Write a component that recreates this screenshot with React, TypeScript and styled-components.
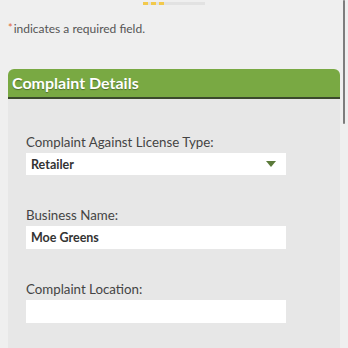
import React from "react";
import styled, { createGlobalStyle } from "styled-components";

const GlobalStyle = createGlobalStyle`
  html, body {
    margin: 0;
    padding: 0;
    background: #efefef;
  }
  body {
    font-family: Lato, "Open Sans", sans-serif;
    color: #444;
  }
`;

const Page = styled.div`
  position: relative;
  min-height: 348px;
  width: 348px;
  overflow: hidden;
  background: #efefef;
`;

const ScrollThumb = styled.div`
  position: absolute;
  top: 0;
  right: 3px;
  width: 2px;
  height: 124px;
  border-radius: 1px;
  background: #7d7d7d;
`;

const Progress = styled.div`
  display: flex;
  align-items: center;
  width: 62px;
  height: 3px;
  margin: 2px auto 0;
  background: #e2e2e2;

  & span {
    width: 5px;
    height: 3px;
    margin-right: 3px;
    background: #f2c94c;
  }
`;

const RequiredNote = styled.div`
  margin: 15px 0 0 8px;
  font-size: 12px;
  line-height: 16px;
  color: #555;

  & .star {
    color: #e0663a;
    font-size: 11px;
    vertical-align: 1px;
    margin-right: 1px;
  }
`;

const Section = styled.section`
  margin: 32px 8px 0;
  width: 332px;
`;

const SectionHeader = styled.h2`
  margin: 0;
  height: 28px;
  padding: 0 4px;
  background: #79a943;
  border-radius: 6px 6px 0 0;
  border-bottom: 2px solid #3b4a2c;
  color: #fff;
  font-size: 16px;
  font-weight: 700;
  line-height: 27px;
  text-shadow: 0 1px 1px rgba(0, 0, 0, 0.35);
`;

const SectionBody = styled.div`
  display: flex;
  flex-direction: column;
  gap: 32px;
  padding: 35px 18px 40px;
  background: #e7e7e7;
`;

const Field = styled.div`
  display: flex;
  flex-direction: column;
  gap: 2px;
`;

const Label = styled.label`
  font-size: 13.3px;
  line-height: 17px;
  color: #444;
`;

const Box = styled.div<{ $tall?: boolean }>`
  display: flex;
  align-items: center;
  justify-content: space-between;
  width: 260px;
  height: ${(p) => (p.$tall ? 23 : 22)}px;
  padding: 0 6px 0 5px;
  box-sizing: border-box;
  background: #fff;
  font-size: 12.5px;
  font-weight: 700;
  color: #333;
`;

const Caret = styled.span`
  width: 0;
  height: 0;
  margin-right: 4px;
  border-left: 5px solid transparent;
  border-right: 5px solid transparent;
  border-top: 6px solid #5b7a3a;
`;

export default function App() {
  return (
    <Page>
      <GlobalStyle />
      <ScrollThumb />
      <Progress>
        <span />
        <span />
        <span />
      </Progress>
      <RequiredNote>
        <span className="star">*</span>indicates a required field.
      </RequiredNote>

      <Section>
        <SectionHeader>Complaint Details</SectionHeader>
        <SectionBody>
          <Field>
            <Label>Complaint Against License Type:</Label>
            <Box>
              Retailer
              <Caret />
            </Box>
          </Field>
          <Field>
            <Label>Business Name:</Label>
            <Box $tall>Moe Greens</Box>
          </Field>
          <Field>
            <Label>Complaint Location:</Label>
            <Box $tall />
          </Field>
        </SectionBody>
      </Section>
    </Page>
  );
}
